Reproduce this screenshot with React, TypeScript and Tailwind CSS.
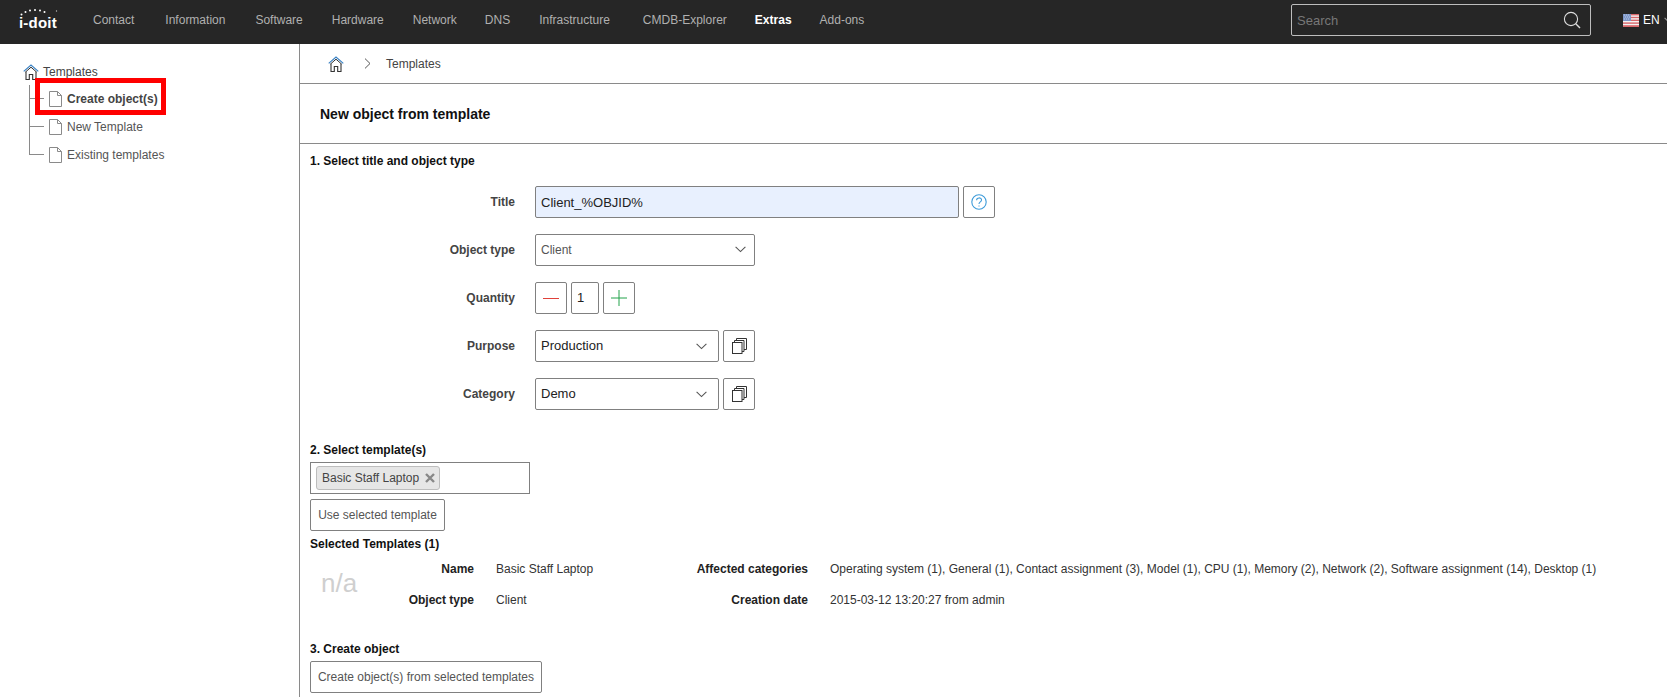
import React from "react";

const navItems: [string, string][] = [
  ["Contact", "ml-[35px]"],
  ["Information", "ml-[31px]"],
  ["Software", "ml-[30px]"],
  ["Hardware", "ml-[29px]"],
  ["Network", "ml-[29px]"],
  ["DNS", "ml-[28px]"],
  ["Infrastructure", "ml-[29px]"],
  ["CMDB-Explorer", "ml-[33px]"],
  ["Extras", "ml-[28px]"],
  ["Add-ons", "ml-[28px]"],
];

function Logo() {
  return (
    <div className="relative ml-[19px] h-[26px] w-[39px] shrink-0">
      <svg className="absolute left-0 top-[1px]" width="39" height="10" viewBox="0 0 39 10" fill="#fff">
        <circle cx="2.5" cy="6.5" r="1" />
        <circle cx="6.5" cy="4" r="1" />
        <circle cx="11" cy="2.6" r="1" />
        <circle cx="16" cy="2" r="1" />
        <circle cx="21" cy="2.4" r="1" />
        <circle cx="25.5" cy="4" r="1" />
        <circle cx="37.5" cy="3" r="0.7" fill="#bbb" />
      </svg>
      <span className="absolute left-0 top-[7px] text-[15px] font-bold leading-[17px] tracking-[0.2px] text-white">i-doit</span>
    </div>
  );
}

function SearchIcon() {
  return (
    <svg width="18" height="18" viewBox="0 0 18 18" fill="none" stroke="#ddd" strokeWidth="1.1">
      <circle cx="8" cy="8" r="6.6" />
      <path d="M12.8 12.8 L17 17" strokeWidth="1.4" />
    </svg>
  );
}

function Flag() {
  return (
    <svg width="16" height="13" viewBox="0 0 16 13" className="shrink-0">
      <rect width="16" height="13" fill="#f4f4f4" />
      <rect y="0" width="16" height="1.4" fill="#d9676b" />
      <rect y="2.8" width="16" height="1.4" fill="#d9676b" />
      <rect y="5.6" width="16" height="1.4" fill="#d9676b" />
      <rect y="8.4" width="16" height="1.4" fill="#d9676b" />
      <rect y="11.2" width="16" height="1.8" fill="#d9676b" />
      <rect width="8" height="7" fill="#7d97c9" />
      <path d="M1 1h.8M3 1h.8M5 1h.8M2 3h.8M4 3h.8M6 3h.8M1 5h.8M3 5h.8M5 5h.8" stroke="#dfe6f5" strokeWidth="0.8" />
    </svg>
  );
}

function HomeIcon() {
  return (
    <svg width="16" height="16" viewBox="0 0 16 16" fill="none" className="shrink-0">
      <path d="M0.7 7.4 L8 1 L15.3 7.4" stroke="#3b82c4" strokeWidth="1.2" />
      <path d="M3 7.4 V15.5 H6.3 V10.5 H9.7 V15.5 H13 V7.4" stroke="#333" strokeWidth="1.1" />
      <path d="M2.5 8 L8 3.2 L13.5 8" stroke="#333" strokeWidth="1" />
    </svg>
  );
}

function FileIcon() {
  return (
    <svg width="13" height="16" viewBox="0 0 13 16" fill="none" stroke="#8a8a8a" strokeWidth="1" className="shrink-0">
      <path d="M0.5 0.5 H8.5 L12.5 4.5 V15.5 H0.5 Z" />
      <path d="M8.5 0.5 V4.5 H12.5" />
    </svg>
  );
}

function Chevron({ color = "#555" }: { color?: string }) {
  return (
    <svg width="11" height="7" viewBox="0 0 11 7" fill="none" stroke={color} strokeWidth="1.1" className="shrink-0">
      <path d="M0.6 0.8 L5.5 5.6 L10.4 0.8" />
    </svg>
  );
}

function CopyIcon() {
  return (
    <svg width="15" height="16" viewBox="0 0 15 16" fill="none" stroke="#333" strokeWidth="1">
      <rect x="0.5" y="4.5" width="9.5" height="11" />
      <path d="M2.5 4.5 V2.5 H12 V13.5 H10" />
      <path d="M4.5 2.5 V0.5 H14.5 V11.5 H12" />
    </svg>
  );
}

function HelpIcon() {
  return (
    <svg width="16" height="16" viewBox="0 0 16 16" fill="none" stroke="#3d9bd9" strokeWidth="1.1">
      <circle cx="8" cy="8" r="7.2" />
      <path d="M5.6 6.2 C5.6 3.2 10.5 3.2 10.5 6 C10.5 7.9 8 7.8 8 10" />
      <path d="M8 11.4 V12.5" />
    </svg>
  );
}

function TreeRow({ label, bold, last }: { label: string; bold?: boolean; last?: boolean }) {
  return (
    <div className="flex h-[28px] items-center">
      <div className="flex h-full w-[15px] flex-col">
        <div className="h-[14px] border-b border-l border-[#8a8a8a]" />
        <div className={last ? "flex-1" : "flex-1 border-l border-[#8a8a8a]"} />
      </div>
      <div className="ml-[5px]"><FileIcon /></div>
      <span className={bold ? "ml-[5px] font-bold text-[#444]" : "ml-[5px] text-[#555]"}>{label}</span>
    </div>
  );
}

function Sidebar() {
  return (
    <aside className="relative w-[300px] shrink-0 border-r border-[#8a8a8a] pl-[23px] pt-[20px]">
      <div className="flex h-[16px] items-center gap-[4px] text-[#444]">
        <HomeIcon />
        <span>Templates</span>
      </div>
      <div className="ml-[6px] mt-[5px]">
        <TreeRow label="Create object(s)" bold />
        <TreeRow label="New Template" />
        <TreeRow label="Existing templates" last />
      </div>
      <div className="absolute left-[35px] top-[34px] h-[37px] w-[131px] border-[5px] border-[#ff0000]" />
    </aside>
  );
}

const box = "border border-[#808080] rounded-[2px] bg-white";

function Row({ label, children, className }: { label: string; children: React.ReactNode; className?: string }) {
  return (
    <div className={`flex h-[32px] items-center ${className ?? ""}`}>
      <div className="w-[205px] text-right font-bold text-[#444]">{label}</div>
      <div className="ml-[20px] flex h-full items-stretch">{children}</div>
    </div>
  );
}

function IconBox({ children, className }: { children: React.ReactNode; className?: string }) {
  return <div className={`${box} flex w-[32px] items-center justify-center ${className ?? ""}`}>{children}</div>;
}

function PickSelect({ value }: { value: string }) {
  return (
    <>
      <div className={`${box} flex w-[184px] items-center justify-between pl-[5px] pr-[11px] text-[13px] text-[#222]`}>
        <span>{value}</span>
        <Chevron />
      </div>
      <IconBox className="ml-[4px]"><CopyIcon /></IconBox>
    </>
  );
}

function DetailRow({ l1, v1, l2, v2, className }: { l1: string; v1: string; l2: string; v2: string; className?: string }) {
  return (
    <div className={`flex items-center leading-[14px] ${className ?? ""}`}>
      <div className="w-[164px] shrink-0 text-right font-bold text-[#222]">{l1}</div>
      <div className="ml-[22px] w-[150px] shrink-0 text-[#333]">{v1}</div>
      <div className="w-[162px] shrink-0 text-right font-bold text-[#222]">{l2}</div>
      <div className="ml-[22px] whitespace-nowrap text-[#333]">{v2}</div>
    </div>
  );
}

function Main() {
  return (
    <main className="min-w-0 flex-1">
      <div className="flex h-[40px] items-center border-b border-[#8a8a8a] pl-[28px] text-[#444]">
        <HomeIcon />
        <svg width="7" height="11" viewBox="0 0 7 11" fill="none" stroke="#555" strokeWidth="1" className="ml-[20px]">
          <path d="M1 0.6 L6 5.5 L1 10.4" />
        </svg>
        <span className="ml-[15px]">Templates</span>
      </div>
      <div className="flex h-[60px] items-center border-b border-[#8a8a8a] pl-[20px] pt-[1px] text-[14px] font-bold text-[#111]">
        New object from template
      </div>

      <div className="pl-[10px]">
        <h2 className="mt-[10px] font-bold leading-[14px] text-[#111]">1. Select title and object type</h2>

        <Row label="Title" className="mt-[18px]">
          <input
            readOnly
            value="Client_%OBJID%"
            className="h-full w-[424px] rounded-[2px] border border-[#808080] bg-[#e8f0fe] pl-[5px] text-[13px] text-[#222] outline-none"
          />
          <IconBox className="ml-[4px]"><HelpIcon /></IconBox>
        </Row>

        <Row label="Object type" className="mt-[16px]">
          <div className={`${box} flex w-[220px] items-center justify-between pl-[5px] pr-[8px] text-[#555]`}>
            <span>Client</span>
            <span className="-mt-[2px]"><Chevron /></span>
          </div>
        </Row>

        <Row label="Quantity" className="mt-[16px]">
          <IconBox>
            <span className="block h-px w-[16px] bg-[#e0413a]" />
          </IconBox>
          <div className={`${box} ml-[4px] flex w-[28px] items-center pl-[5px] text-[13px] text-[#222]`}>1</div>
          <IconBox className="ml-[4px]">
            <svg width="16" height="16" viewBox="0 0 16 16" stroke="#22a24a" strokeWidth="1"><path d="M0 8 H16 M8 0 V16" /></svg>
          </IconBox>
        </Row>

        <Row label="Purpose" className="mt-[16px]"><PickSelect value="Production" /></Row>
        <Row label="Category" className="mt-[16px]"><PickSelect value="Demo" /></Row>

        <h2 className="mt-[33px] font-bold leading-[14px] text-[#111]">2. Select template(s)</h2>
        <div className="mt-[5px] flex h-[32px] w-[220px] items-center border border-[#808080] pl-[5px]">
          <div className="flex h-[24px] w-[124px] items-center rounded-[3px] border border-[#bdbdbd] bg-[#e6e6e6] pl-[5px] text-[#444]">
            <span>Basic Staff Laptop</span>
            <svg width="10" height="10" viewBox="0 0 10 10" stroke="#888" strokeWidth="2.4" className="ml-[6px]"><path d="M1 1 L9 9 M9 1 L1 9" /></svg>
          </div>
        </div>
        <div className={`${box} mt-[5px] flex h-[32px] w-[135px] items-center justify-center text-[#555]`}>Use selected template</div>
        <h3 className="mt-[6px] font-bold leading-[14px] text-[#111]">Selected Templates (1)</h3>

        <div className="relative mt-[11px]">
          <DetailRow l1="Name" v1="Basic Staff Laptop" l2="Affected categories" v2="Operating system (1), General (1), Contact assignment (3), Model (1), CPU (1), Memory (2), Network (2), Software assignment (14), Desktop (1)" />
          <DetailRow className="mt-[17px]" l1="Object type" v1="Client" l2="Creation date" v2="2015-03-12 13:20:27 from admin" />
          <span className="absolute left-[11px] top-[6px] text-[26px] leading-[30px] text-[#cfcfcf]">n/a</span>
        </div>

        <h2 className="mt-[35px] font-bold leading-[14px] text-[#111]">3. Create object</h2>
        <div className={`${box} mt-[5px] flex h-[32px] w-[232px] items-center justify-center text-[#555]`}>Create object(s) from selected templates</div>
      </div>
    </main>
  );
}

export default function App() {
  return (
    <div className="flex h-[697px] w-[1667px] flex-col overflow-hidden bg-white font-['Liberation_Sans',Arial,sans-serif] text-[12px]">
      <header className="flex h-[44px] shrink-0 items-center bg-[#262626] pb-[4px]">
        <Logo />
        {navItems.map(([n, m]) => (
          <span key={n} className={n === "Extras" ? `${m} font-bold text-white` : `${m} text-[#b0b0b0]`}>{n}</span>
        ))}
        <div className="ml-auto flex h-[32px] w-[300px] items-center justify-between rounded-[2px] border border-[#bdbdbd] pl-[5px] pr-[9px]">
          <input placeholder="Search" className="w-[200px] bg-transparent pt-[2px] text-[13px] text-white outline-none placeholder:text-[#777]" />
          <SearchIcon />
        </div>
        <div className="ml-[32px] flex w-[44px] items-center gap-[4px] overflow-hidden text-white">
          <Flag />
          <span>EN</span>
          <Chevron color="#999" />
        </div>
      </header>
      <div className="flex min-h-0 flex-1">
        <Sidebar />
        <Main />
      </div>
    </div>
  );
}
